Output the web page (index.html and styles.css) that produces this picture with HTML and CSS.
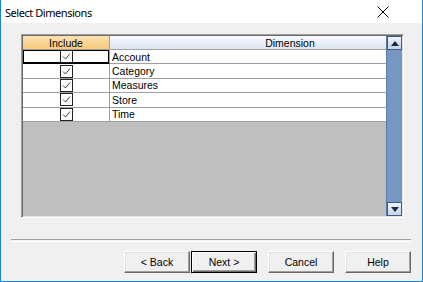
FILE: index.html
```html
<!DOCTYPE html>
<html lang="en">
<head>
    <meta charset="UTF-8">
    <title>Select Dimensions</title>
    <link rel="stylesheet" href="styles.css">
</head>
<body>
<div class="window">
    <div class="titlebar">
        <span class="title">Select Dimensions</span>
        <svg class="close" width="12" height="12" viewBox="0 0 12 12">
            <path d="M0.5 0.5 L11.5 11.5 M11.5 0.5 L0.5 11.5" stroke="#000" stroke-width="1" fill="none"/>
        </svg>
    </div>
    <div class="content">
        <div class="grid">
            <div class="table">
                <div class="row header">
                    <div class="cell include">Include</div>
                    <div class="cell dimension">Dimension</div>
                </div>
                <div class="row">
                    <div class="cell include focused"><span class="check"></span></div>
                    <div class="cell name">Account</div>
                </div>
                <div class="row">
                    <div class="cell include"><span class="check"></span></div>
                    <div class="cell name">Category</div>
                </div>
                <div class="row">
                    <div class="cell include"><span class="check"></span></div>
                    <div class="cell name">Measures</div>
                </div>
                <div class="row">
                    <div class="cell include"><span class="check"></span></div>
                    <div class="cell name">Store</div>
                </div>
                <div class="row">
                    <div class="cell include"><span class="check"></span></div>
                    <div class="cell name">Time</div>
                </div>
                <div class="empty"></div>
            </div>
            <div class="scrollbar">
                <div class="arrow">
                    <svg width="8" height="5" viewBox="0 0 8 5"><path d="M0 5 L4 0 L8 5 Z" fill="#1c2a44"/></svg>
                </div>
                <div class="track"></div>
                <div class="arrow">
                    <svg width="8" height="5" viewBox="0 0 8 5"><path d="M0 0 L4 5 L8 0 Z" fill="#1c2a44"/></svg>
                </div>
            </div>
        </div>
        <div class="separator"></div>
        <div class="buttons">
            <button class="btn">&lt; Back</button>
            <button class="btn default">Next &gt;</button>
            <button class="btn spaced">Cancel</button>
            <button class="btn spaced">Help</button>
        </div>
    </div>
</div>

<script>
    // Draw the checkmarks into every include cell
    document.querySelectorAll('.check').forEach(function(box) {
        box.innerHTML = '<svg width="13" height="13" viewBox="0 0 13 13">' +
            '<rect x="0.5" y="0.5" width="12" height="12" fill="#fff" stroke="#222"/>' +
            '<path d="M3 6.5 L5.5 9 L10 3.5" stroke="#444" stroke-width="1" fill="none"/></svg>';
    });
</script>
</body>
</html>
```

FILE: styles.css
```css
body {
    margin: 0;
    padding: 0;
    background: #f0f0f0;
    font-family: "Liberation Sans", Arial, sans-serif;
    font-size: 11px;
    color: #000;
}
.window {
    width: 423px;
    height: 282px;
    box-sizing: border-box;
    border: 1px solid #1883d7;
    border-top: none;
    display: flex;
    flex-direction: column;
}
.titlebar {
    height: 23px;
    background: #fff;
    display: flex;
    align-items: center;
    justify-content: space-between;
    padding: 0 33px 0 4px;
}
.title {
    font-family: "Noto Sans", sans-serif;
    font-size: 11px;
    letter-spacing: -0.45px;
    margin-top: 1px;
}
.close {
    display: block;
    margin-top: 1px;
}
.content {
    flex: 1;
    background: #f0f0f0;
    padding: 11px 0 0 20px;
}
.grid {
    width: 383px;
    height: 184px;
    box-sizing: border-box;
    border: 1px solid;
    border-color: #a0a0a0 #fff #fff #a0a0a0;
    box-shadow: inset 1px 1px #696969, inset -1px -1px #e3e3e3;
    padding: 1px;
    display: flex;
}
.table {
    flex: 1;
    display: flex;
    flex-direction: column;
    background: #bfbfbf;
}
.row {
    display: flex;
    height: 13.4px;
    background: #fff;
    border-bottom: 1px solid #a0a0a0;
    font-size: 10.5px;
}
.cell {
    display: flex;
    align-items: center;
    line-height: 12px;
}
.include {
    width: 86px;
    justify-content: center;
    border-right: 1px solid #a0a0a0;
}
.name {
    flex: 1;
    padding-left: 2px;
}
.header {
    height: 13px;
    border-bottom: 1px solid #a0a0a0;
}
.header .include {
    background: linear-gradient(#fbe2b0, #f7c97a);
}
.header .dimension {
    flex: 1;
    justify-content: center;
    padding-left: 84px;
    background: linear-gradient(#f7f9fc, #dce5f0);
}
.focused {
    box-shadow: inset 1px 1px #000, inset -1px -1px #000;
    border-bottom: 1px solid #000;
    margin-bottom: -1px;
}
.check svg {
    display: block;
}
.empty {
    flex: 1;
}
.scrollbar {
    width: 16px;
    display: flex;
    flex-direction: column;
    background: #7597c2;
    border-left: 1px solid #5c7aa3;
    box-sizing: border-box;
}
.arrow {
    height: 14px;
    box-sizing: border-box;
    border: 1px solid #3f5a80;
    background: linear-gradient(#eef3fa, #c4d4ea);
    display: flex;
    align-items: center;
    justify-content: center;
}
.track {
    flex: 1;
}
.separator {
    width: 400px;
    margin: 21px 0 0 -10px;
    height: 1px;
    border-top: 1px solid #a0a0a0;
    border-bottom: 1px solid #fff;
}
.buttons {
    display: flex;
    margin: 9px 0 0 103px;
}
.btn {
    width: 66px;
    height: 22px;
    margin-right: 1px;
    font-family: "Liberation Sans", Arial, sans-serif;
    font-size: 10.5px;
    color: #000;
    background: #f0f0f0;
    border: 1px solid;
    border-color: #fff #696969 #696969 #fff;
    box-shadow: inset -1px -1px #a0a0a0, inset 1px 1px #e3e3e3;
    padding: 0;
}
.btn.default {
    border-color: #000;
    box-shadow: inset 1px 1px #fff, inset -1px -1px #696969, inset -2px -2px #a0a0a0;
}
.spaced {
    margin-left: 10px;
}
```
